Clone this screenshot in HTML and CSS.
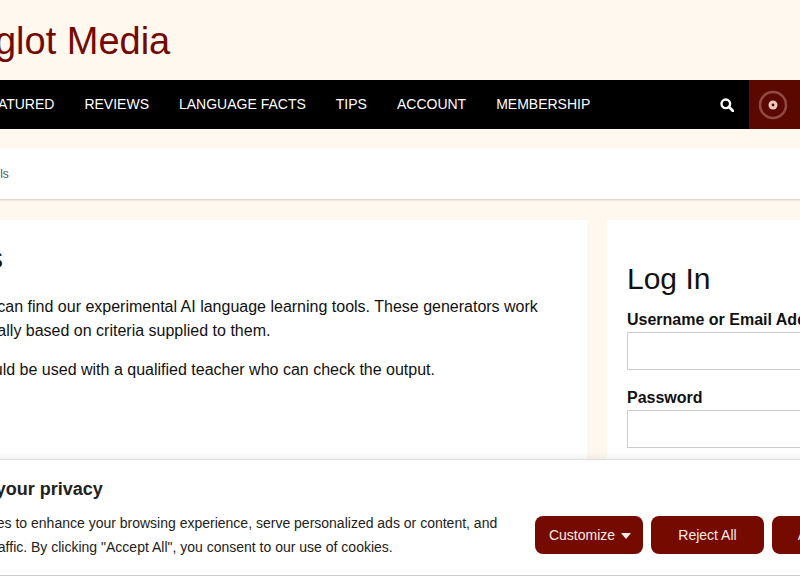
FILE: index.html
```html
<!DOCTYPE html>
<html lang="en">
<head>
<meta charset="utf-8">
<title>Polyglot Media</title>
<link rel="stylesheet" href="styles.css">
</head>
<body>
<div class="page">
  <header class="masthead"><h1 class="site-title">Polyglot Media</h1></header>
  <nav class="nav">
    <ul class="nav-links">
      <li>FEATURED</li><li>REVIEWS</li><li>LANGUAGE FACTS</li><li>TIPS</li><li>ACCOUNT</li><li>MEMBERSHIP</li>
    </ul>
    <span class="search">
      <svg width="14" height="14" viewBox="0 0 14 14"><circle cx="5.8" cy="5.8" r="4.3" fill="none" stroke="#fff" stroke-width="2.4"/><path d="M9 9l4 4" stroke="#fff" stroke-width="2.8" stroke-linecap="round"/></svg>
    </span>
    <span class="player">
      <svg width="30" height="30" viewBox="0 0 30 30"><circle cx="15" cy="15" r="13" fill="none" stroke="#8f4a42" stroke-width="2.5"/><circle cx="15" cy="15" r="4.5" fill="#f0c8c0"/><circle cx="15" cy="15" r="1.4" fill="#5b0900"/></svg>
    </span>
  </nav>
  <div class="crumbs">Home / Tools</div>
  <div class="columns">
    <main class="card main-card">
      <h2 class="heading main-heading">Tools</h2>
      <p class="para">Here you can find our experimental AI language learning tools. These generators work<br>automatically based on criteria supplied to them.</p>
      <p class="para">They should be used with a qualified teacher who can check the output.</p>
    </main>
    <aside class="card side-card">
      <h2 class="heading login">Log In</h2>
      <label class="label">Username or Email Address</label>
      <div class="input"></div>
      <label class="label">Password</label>
      <div class="input"></div>
    </aside>
  </div>
  <section class="cookie">
    <div class="cookie-text">
      <div class="cookie-title">We value your privacy</div>
      <p class="cookie-body">We use cookies to enhance your browsing experience, serve personalized ads or content, and<br>analyze our traffic. By clicking "Accept All", you consent to our use of cookies.</p>
    </div>
    <div class="cookie-btns">
      <span class="btn btn-custom">Customize <i class="caret"></i></span>
      <span class="btn btn-reject">Reject All</span>
      <span class="btn btn-accept">Accept All</span>
    </div>
  </section>
</div>
</body>
</html>
```
FILE: styles.css
```css
html, body { margin: 0; padding: 0; height: 576px; overflow: hidden; background: #fff; }
body { font-family: "Liberation Sans", Arial, sans-serif; color: #111; }
.page { position: relative; width: 1200px; height: 576px; margin-left: -88px; background: #fff8ee; overflow: hidden; }
.masthead { height: 80px; box-sizing: border-box; padding: 2px 0 0 9px; display: flex; align-items: center; }
.site-title { margin: 0; font-size: 38px; font-weight: 400; color: #730a00; }
.nav { height: 49px; background: #000; display: flex; align-items: center; width: 1200px; }
.nav-links { list-style: none; margin: 0 0 2px; padding: 0 0 0 68px; display: flex; gap: 30px; color: #fff; font-size: 14px; width: 710px; }
.search { margin-left: 30px; display: flex; }
.player { margin-left: 15px; width: 48px; height: 49px; padding-right: 3px; background: #5b0900; display: flex; align-items: center; justify-content: center; }
.crumbs { margin-top: 19px; height: 51px; line-height: 52px; background: #fff; font-size: 12px; color: #555; padding-left: 27px; box-shadow: 0 1px 2px rgba(0,0,0,.18); }
.columns { display: flex; gap: 20px; margin-top: 21px; }
.card { background: #fff; box-sizing: border-box; padding: 20px; height: 320px; }
.main-card { width: 675px; padding-top: 0; }
.side-card { width: 505px; }
.heading { margin: 22px 0 15px; font-size: 30px; font-weight: 400; line-height: 36px; color: #111; }
.main-heading { margin: 20px 0 19px 1px; }
.para { margin: 0 0 15px -4px; font-size: 16px; line-height: 24px; }
.login { margin: 21px 0 13px; }
.label { display: block; font-size: 16px; font-weight: 700; line-height: 20px; }
.input { height: 36px; border: 1px solid #ccc; margin: 2px 0 18px; background: #fff; }
.cookie { position: absolute; left: 0; right: 0; top: 459px; height: 117px; box-sizing: border-box; background: #fff; border-top: 1px solid #ddd; border-bottom: 1px solid #ccc; box-shadow: 0 -4px 8px rgba(0,0,0,.05); display: flex; align-items: center; padding-left: 1px; }
.cookie-text { width: 622px; }
.cookie-title { font-size: 18px; font-weight: 700; color: #212121; line-height: 24px; margin-bottom: 10px; }
.cookie-body { margin: 0; font-size: 14px; line-height: 24px; color: #212121; }
.cookie-btns { display: flex; gap: 8px; margin-top: 34px; }
.btn { height: 38px; box-sizing: border-box; background: #750b00; color: #fbeae6; font-size: 14px; border-radius: 8px; display: flex; align-items: center; justify-content: center; }
.btn-custom { width: 108px; gap: 6px; padding-left: 2px; }
.btn-reject { width: 113px; }
.btn-accept { width: 113px; }
.caret { width: 0; height: 0; border-left: 5px solid transparent; border-right: 5px solid transparent; border-top: 6px solid #fbeae6; margin-top: 2px; }
```
